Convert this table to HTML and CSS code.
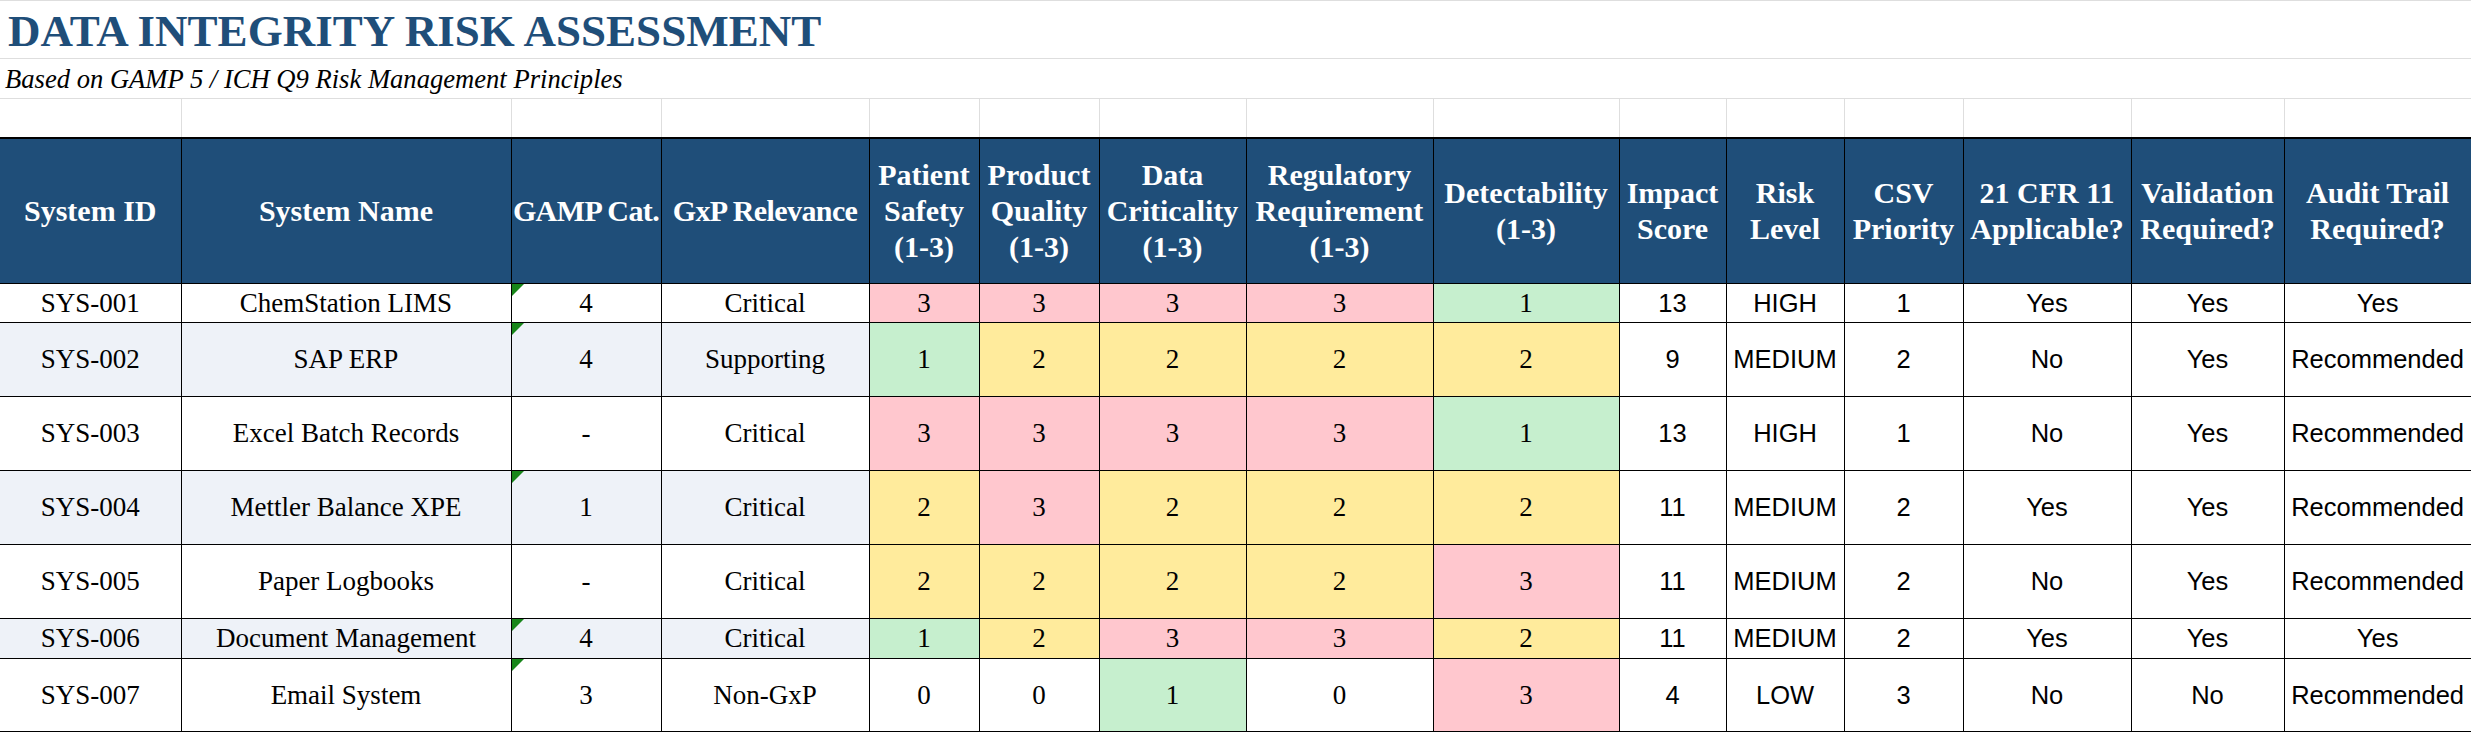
FILE: index.html
```html
<!DOCTYPE html>
<html lang="en">
<head>
<meta charset="utf-8">
<title>Data Integrity Risk Assessment</title>
<link rel="stylesheet" href="styles.css">
</head>
<body>
<table class="sheet">
  <colgroup>
    <col class="c-a"><col class="c-b"><col class="c-c"><col class="c-d"><col class="c-e">
    <col class="c-f"><col class="c-g"><col class="c-h"><col class="c-i"><col class="c-j">
    <col class="c-k"><col class="c-l"><col class="c-m"><col class="c-n"><col class="c-o">
  </colgroup>
  <tr class="row-title"><td colspan="15" class="title">DATA INTEGRITY RISK ASSESSMENT</td></tr>
  <tr class="row-sub"><td colspan="15" class="subtitle">Based on GAMP 5 / ICH Q9 Risk Management Principles</td></tr>
  <tr class="row-gap">
    <td class="gap"></td><td class="gap"></td><td class="gap"></td><td class="gap"></td><td class="gap"></td>
    <td class="gap"></td><td class="gap"></td><td class="gap"></td><td class="gap"></td><td class="gap"></td>
    <td class="gap"></td><td class="gap"></td><td class="gap"></td><td class="gap"></td><td class="gap"></td>
  </tr>
  <tr class="row-head">
    <th>System ID</th>
    <th>System Name</th>
    <th class="nowrap">GAMP Cat.</th>
    <th class="nowrap">GxP Relevance</th>
    <th>Patient Safety (1-3)</th>
    <th>Product Quality (1-3)</th>
    <th>Data Criticality (1-3)</th>
    <th>Regulatory Requirement (1-3)</th>
    <th>Detectability (1-3)</th>
    <th>Impact Score</th>
    <th>Risk Level</th>
    <th>CSV Priority</th>
    <th>21 CFR 11 Applicable?</th>
    <th>Validation Required?</th>
    <th>Audit Trail Required?</th>
  </tr>
  <tr class="row-s">
    <td class="serif">SYS-001</td><td class="serif">ChemStation LIMS</td><td class="serif flag">4</td><td class="serif">Critical</td>
    <td class="serif red">3</td><td class="serif red">3</td><td class="serif red">3</td><td class="serif red">3</td><td class="serif green">1</td>
    <td class="sans">13</td><td class="sans">HIGH</td><td class="sans">1</td><td class="sans">Yes</td><td class="sans">Yes</td><td class="sans">Yes</td>
  </tr>
  <tr class="row-t alt">
    <td class="serif">SYS-002</td><td class="serif">SAP ERP</td><td class="serif flag">4</td><td class="serif">Supporting</td>
    <td class="serif green">1</td><td class="serif yellow">2</td><td class="serif yellow">2</td><td class="serif yellow">2</td><td class="serif yellow">2</td>
    <td class="sans">9</td><td class="sans">MEDIUM</td><td class="sans">2</td><td class="sans">No</td><td class="sans">Yes</td><td class="sans">Recommended</td>
  </tr>
  <tr class="row-t">
    <td class="serif">SYS-003</td><td class="serif">Excel Batch Records</td><td class="serif">-</td><td class="serif">Critical</td>
    <td class="serif red">3</td><td class="serif red">3</td><td class="serif red">3</td><td class="serif red">3</td><td class="serif green">1</td>
    <td class="sans">13</td><td class="sans">HIGH</td><td class="sans">1</td><td class="sans">No</td><td class="sans">Yes</td><td class="sans">Recommended</td>
  </tr>
  <tr class="row-t alt">
    <td class="serif">SYS-004</td><td class="serif">Mettler Balance XPE</td><td class="serif flag">1</td><td class="serif">Critical</td>
    <td class="serif yellow">2</td><td class="serif red">3</td><td class="serif yellow">2</td><td class="serif yellow">2</td><td class="serif yellow">2</td>
    <td class="sans">11</td><td class="sans">MEDIUM</td><td class="sans">2</td><td class="sans">Yes</td><td class="sans">Yes</td><td class="sans">Recommended</td>
  </tr>
  <tr class="row-t">
    <td class="serif">SYS-005</td><td class="serif">Paper Logbooks</td><td class="serif">-</td><td class="serif">Critical</td>
    <td class="serif yellow">2</td><td class="serif yellow">2</td><td class="serif yellow">2</td><td class="serif yellow">2</td><td class="serif red">3</td>
    <td class="sans">11</td><td class="sans">MEDIUM</td><td class="sans">2</td><td class="sans">No</td><td class="sans">Yes</td><td class="sans">Recommended</td>
  </tr>
  <tr class="row-m alt">
    <td class="serif">SYS-006</td><td class="serif">Document Management</td><td class="serif flag">4</td><td class="serif">Critical</td>
    <td class="serif green">1</td><td class="serif yellow">2</td><td class="serif red">3</td><td class="serif red">3</td><td class="serif yellow">2</td>
    <td class="sans">11</td><td class="sans">MEDIUM</td><td class="sans">2</td><td class="sans">Yes</td><td class="sans">Yes</td><td class="sans">Yes</td>
  </tr>
  <tr class="row-last">
    <td class="serif">SYS-007</td><td class="serif">Email System</td><td class="serif flag">3</td><td class="serif">Non-GxP</td>
    <td class="serif">0</td><td class="serif">0</td><td class="serif green">1</td><td class="serif">0</td><td class="serif red">3</td>
    <td class="sans">4</td><td class="sans">LOW</td><td class="sans">3</td><td class="sans">No</td><td class="sans">No</td><td class="sans">Recommended</td>
  </tr>
</table>
</body>
</html>
```

FILE: styles.css
```css
html, body {
  margin: 0;
  padding: 0;
  background: #ffffff;
}

.sheet {
  border-collapse: collapse;
  table-layout: fixed;
  width: 2471px;
  font-family: "Liberation Serif", "Times New Roman", serif;
  color: #000000;
}

.c-a { width: 181px; }
.c-b { width: 330px; }
.c-c { width: 150px; }
.c-d { width: 208px; }
.c-e { width: 110px; }
.c-f { width: 120px; }
.c-g { width: 147px; }
.c-h { width: 187px; }
.c-i { width: 186px; }
.c-j { width: 107px; }
.c-k { width: 118px; }
.c-l { width: 119px; }
.c-m { width: 168px; }
.c-n { width: 153px; }
.c-o { width: 187px; }

.row-title { height: 58px; }
.row-sub { height: 40px; }
.row-gap { height: 39px; }
.row-head { height: 146px; }
.row-s { height: 39px; }
.row-m { height: 40px; }
.row-t { height: 74px; }
.row-last { height: 73px; }

.title {
  border: 1px solid #dedede;
  border-left: none;
  padding: 0 0 1px 8px;
  vertical-align: bottom;
  font-size: 45px;
  font-weight: bold;
  color: #1f4e79;
  white-space: nowrap;
}

.subtitle {
  border: 1px solid #dedede;
  border-left: none;
  padding: 0 0 3px 5px;
  vertical-align: bottom;
  font-size: 26.6px;
  font-style: italic;
  white-space: nowrap;
}

.gap {
  border: 1px solid #dedede;
  padding: 0;
}
.gap:first-child { border-left: none; }

.row-head th {
  background: #1f4e79;
  color: #ffffff;
  border: 1px solid #000000;
  border-top: 2px solid #000000;
  font-size: 30px;
  line-height: 36px;
  font-weight: bold;
  text-align: center;
  vertical-align: middle;
  padding: 0 3px;
}
.row-head th:first-child { border-left: none; }
.row-head th.nowrap { white-space: nowrap; padding: 0; letter-spacing: -0.6px; }

td.serif, td.sans {
  border: 1px solid #000000;
  text-align: center;
  vertical-align: middle;
  padding: 0 2px;
  white-space: nowrap;
  position: relative;
}
tr > td.serif:first-child { border-left: none; }

td.serif {
  font-family: "Liberation Serif", "Times New Roman", serif;
  font-size: 27px;
}
td.sans {
  font-family: "Liberation Sans", Arial, sans-serif;
  font-size: 25.5px;
  background: #ffffff;
}

.alt td.serif { background: #eef2f8; }
td.serif.red, .alt td.serif.red { background: #ffc7ce; }
td.serif.yellow, .alt td.serif.yellow { background: #ffeb9c; }
td.serif.green, .alt td.serif.green { background: #c6efce; }

td.flag::before {
  content: "";
  position: absolute;
  left: 0;
  top: 0;
  width: 0;
  height: 0;
  border-top: 12px solid #18861a;
  border-right: 12px solid transparent;
}
```
